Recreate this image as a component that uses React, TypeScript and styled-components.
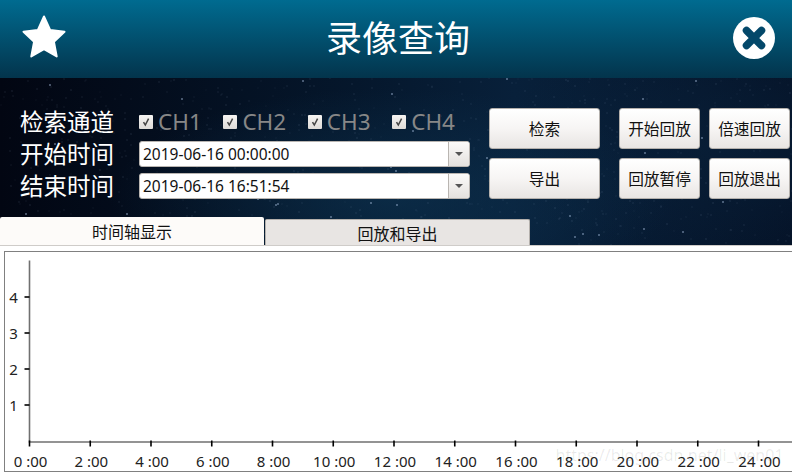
import styled, { createGlobalStyle } from "styled-components";

const FONT = `"Noto Sans", "Noto Sans CJK SC", sans-serif`;

// star field: small seeded generator so the picture stays the same on every load
function starLayers(count: number) {
  let seed = 4711;
  const rnd = () => {
    seed = (seed * 16807) % 2147483647;
    return seed / 2147483647;
  };
  const layers: string[] = [];
  for (let i = 0; i < count; i++) {
    const x = Math.round(rnd() * 792);
    const y = Math.round(rnd() * 167);
    const big = rnd() > 0.95;
    const alpha = (big ? 0.8 : 0.14 + rnd() * 0.4).toFixed(2);
    const r = big ? 1.3 : 0.8;
    layers.push(
      `radial-gradient(circle ${r}px at ${x}px ${y}px, rgba(190,212,245,${alpha}), transparent)`
    );
  }
  return layers.join(",");
}

const GlobalStyle = createGlobalStyle`
  html, body {
    margin: 0;
    padding: 0;
    background: #fff;
  }
  body {
    font-family: ${FONT};
  }
`;

const Page = styled.div`
  width: 792px;
  height: 476px;
  overflow: hidden;
  display: flex;
  flex-direction: column;
`;

const Header = styled.header`
  height: 78px;
  box-sizing: border-box;
  padding: 0 17px 0 21px;
  display: flex;
  align-items: center;
  justify-content: space-between;
  background: linear-gradient(#006b90, #03344c);
`;

const Title = styled.h1`
  margin: 0;
  font-size: 36px;
  font-weight: 400;
  line-height: 78px;
  color: #fff;
`;

const IconSlot = styled.div<{ $align: string; $lift: number }>`
  width: 46px;
  margin-bottom: ${(p) => p.$lift * 2}px;
  display: flex;
  justify-content: ${(p) => p.$align};
`;

const QueryPanel = styled.section`
  height: 167px;
  display: flex;
  flex-direction: column;
  background-color: #051429;
  background-image: ${starLayers(900)},
    radial-gradient(ellipse 280px 110px at 390px 120px, rgba(14, 54, 84, 0.6), transparent),
    radial-gradient(ellipse 240px 110px at 720px 70px, rgba(10, 36, 62, 0.5), transparent),
    linear-gradient(90deg, #020612, #05172c 45%, #08203a 65%, #051328);
`;

const Controls = styled.div`
  display: flex;
  padding: 30px 2px 0 20px;
  height: 91px;
`;

const Form = styled.div`
  width: 450px;
  margin-top: 1px;
  display: grid;
  grid-template-columns: 119px 331px;
  grid-auto-rows: 26px;
  row-gap: 6px;
`;

const FieldLabel = styled.span`
  font-size: 23.5px;
  line-height: 26px;
  color: #fff;
  white-space: nowrap;
`;

const Channels = styled.div`
  display: flex;
  align-items: center;
`;

const Channel = styled.label`
  flex: none;
  width: 84.4px;
  display: flex;
  align-items: center;
  gap: 5px;
  font-size: 22.5px;
  line-height: 26px;
  color: #878787;
`;

const CheckBox = styled.span`
  width: 14px;
  height: 14px;
  display: flex;
  align-items: center;
  justify-content: center;
  background: linear-gradient(#f6f4f2, #dedbd8);
  border-radius: 1px;
`;

const Combo = styled.div`
  display: flex;
  background: #fff;
  border: 1px solid #b9b5b1;
  border-radius: 3px;
  box-sizing: border-box;
  overflow: hidden;
`;

const ComboValue = styled.span`
  flex: 1;
  padding-left: 3px;
  font-size: 15.5px;
  line-height: 25px;
  color: #111;
`;

const ComboArrow = styled.span`
  width: 20px;
  display: flex;
  align-items: center;
  justify-content: center;
  border-left: 1px solid #b9b5b1;
  background: linear-gradient(#fbfaf9, #e4e1de);
  &::after {
    content: "";
    border-left: 4.5px solid transparent;
    border-right: 4.5px solid transparent;
    border-top: 4.5px solid #555;
  }
`;

const Actions = styled.div`
  margin-left: 19px;
  display: grid;
  grid-template-columns: 121px 81px 81px;
  grid-auto-rows: 41px;
  column-gap: 9px;
  row-gap: 9px;
`;

const ActionButton = styled.button`
  padding: 0;
  font-family: ${FONT};
  font-size: 15.7px;
  color: #111;
  border: 1px solid #b4b0ac;
  border-radius: 3px;
  background: linear-gradient(#ffffff, #f7f5f4 50%, #e8e5e3);
`;

const SearchButton = styled(ActionButton)`
  width: 111px;
`;

const TabBar = styled.div`
  margin-top: auto;
  height: 28px;
  display: flex;
  align-items: flex-end;
  gap: 1px;
`;

const Tab = styled.div<{ $active?: boolean }>`
  box-sizing: border-box;
  width: ${(p) => (p.$active ? "264px" : "265px")};
  height: ${(p) => (p.$active ? "28px" : "26px")};
  font-size: 16px;
  line-height: ${(p) => (p.$active ? "30px" : "28px")};
  text-align: center;
  color: #111;
  background: ${(p) => (p.$active ? "#fdfbf9" : "#e8e5e3")};
  border: ${(p) => (p.$active ? "none" : "1px solid #b4b0ac")};
  border-bottom: none;
  border-radius: 2px 2px 0 0;
`;

const ChartPane = styled.section`
  flex: 1;
  border-top: 1px solid #cfccc9;
  padding: 5px 0 0 4px;
  background: #fff;
`;

const ChartFrame = styled.div`
  width: 792px;
  height: 221px;
  box-sizing: border-box;
  border-style: solid;
  border-color: #808080;
  border-width: 1.5px 2px 1.5px 1.5px;
  background: #fff;
`;

const ChartSvg = styled.svg`
  display: block;
  font-family: ${FONT};
`;

const HOURS = [0, 2, 4, 6, 8, 10, 12, 14, 16, 18, 20, 22, 24];
const LEVELS = [1, 2, 3, 4];

function Chart() {
  return (
    <ChartSvg width="788" height="218" viewBox="5.5 252.5 788 218">
      <path d="M30 261V442.5H793" fill="none" stroke="#707070" strokeWidth="1.6" />
      {LEVELS.map((n) => {
        const y = 441.5 - n * 36;
        return (
          <g key={n}>
            <path d={`M25 ${y}H30`} stroke="#000" strokeWidth="1.6" />
            <text x="14" y={y + 5.5} fontSize="15" fill="#222" textAnchor="middle">
              {n}
            </text>
          </g>
        );
      })}
      {HOURS.map((h, i) => {
        const x = 30 + i * 60.75;
        return (
          <g key={h}>
            <path d={`M${x} 441V447`} stroke="#000" strokeWidth="1.6" />
            <text x={x + 1} y="467" fontSize="15" fill="#222" textAnchor="middle">
              {h} :00
            </text>
          </g>
        );
      })}
      <text x="556" y="461" fontSize="16" fill="#000" fillOpacity="0.09">
        https://blog.csdn.net/li_wen01
      </text>
    </ChartSvg>
  );
}

export default function App() {
  return (
    <Page>
      <GlobalStyle />
      <Header>
        <IconSlot $align="flex-start" $lift={3}>
          <svg width="46" height="44" viewBox="0 0 46 44">
            <path
              d="M23 2.5l6.2 13.6 14.3 1.7-10.6 10 2.8 14.6L23 35.2l-12.7 7.2 2.8-14.6-10.6-10 14.3-1.7z"
              fill="#fff"
              stroke="#fff"
              strokeWidth="2"
              strokeLinejoin="round"
            />
          </svg>
        </IconSlot>
        <Title>录像查询</Title>
        <IconSlot $align="flex-end" $lift={1}>
          <svg width="42" height="42" viewBox="0 0 42 42">
            <circle cx="21" cy="21" r="21" fill="#fff" />
            <path d="M13.5 13.5L28.5 28.5M28.5 13.5L13.5 28.5" stroke="#03486a" strokeWidth="7.5" strokeLinecap="round" />
          </svg>
        </IconSlot>
      </Header>
      <QueryPanel>
        <Controls>
          <Form>
            <FieldLabel>检索通道</FieldLabel>
            <Channels>
              {["CH1", "CH2", "CH3", "CH4"].map((ch) => (
                <Channel key={ch}>
                  <CheckBox>
                    <svg width="10" height="10" viewBox="0 0 10 10">
                      <path d="M2.5 5.2L4.3 8L7.6 1.6" fill="none" stroke="#444" strokeWidth="1.5" />
                    </svg>
                  </CheckBox>
                  {ch}
                </Channel>
              ))}
            </Channels>
            <FieldLabel>开始时间</FieldLabel>
            <Combo>
              <ComboValue>2019-06-16 00:00:00</ComboValue>
              <ComboArrow />
            </Combo>
            <FieldLabel>结束时间</FieldLabel>
            <Combo>
              <ComboValue>2019-06-16 16:51:54</ComboValue>
              <ComboArrow />
            </Combo>
          </Form>
          <Actions>
            <SearchButton>检索</SearchButton>
            <ActionButton>开始回放</ActionButton>
            <ActionButton>倍速回放</ActionButton>
            <SearchButton>导出</SearchButton>
            <ActionButton>回放暂停</ActionButton>
            <ActionButton>回放退出</ActionButton>
          </Actions>
        </Controls>
        <TabBar>
          <Tab $active>时间轴显示</Tab>
          <Tab>回放和导出</Tab>
        </TabBar>
      </QueryPanel>
      <ChartPane>
        <ChartFrame>
          <Chart />
        </ChartFrame>
      </ChartPane>
    </Page>
  );
}
